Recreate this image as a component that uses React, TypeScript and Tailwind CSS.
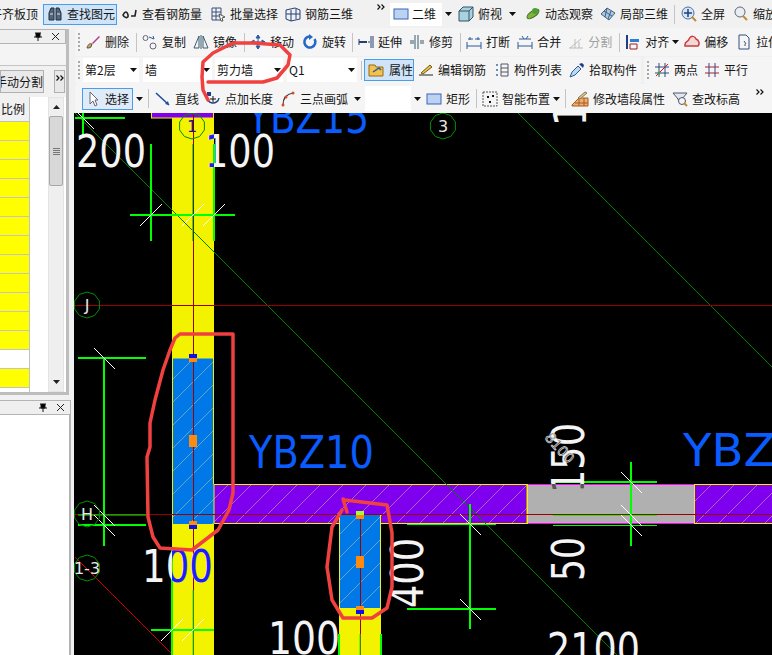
import React from 'react';

const Ico: React.FC<{ children: React.ReactNode; w?: number }> = ({ children, w = 16 }) => (
  <svg width={w} height={16} viewBox={`0 0 ${w} 16`} fill="none" className="shrink-0">
    {children}
  </svg>
);

const Caret = ({ className = '' }: { className?: string }) => (
  <svg width={7} height={4} viewBox="0 0 7 4" className={`shrink-0 ${className}`}>
    <path d="M0 0h7L3.5 4z" fill="#111" />
  </svg>
);

const Sep = ({ className = '' }: { className?: string }) => (
  <div className={`w-px h-[19px] bg-[#c4c4c4] shrink-0 ${className}`} />
);

const Grip = ({ className = '' }: { className?: string }) => (
  <div className={`w-[2px] h-[18px] border-l-2 border-dotted border-[#a8a8a8] shrink-0 ${className}`} />
);

const More = ({ className = '' }: { className?: string }) => (
  <svg width={8} height={6} viewBox="0 0 8 6" fill="none" stroke="#111" strokeWidth={1.2} className={`shrink-0 ${className}`}>
    <path d="M0.500 0.500L3 3L0.500 5.500M4.500 0.500L7 3L4.500 5.500" />
  </svg>
);

const Tool: React.FC<{ icon: React.ReactNode; label: string; className?: string; muted?: boolean }> = ({ icon, label, className = '', muted }) => (
  <div className={`flex items-center gap-[4px] shrink-0 text-[12px] ${muted ? 'text-[#a0a0a0]' : 'text-[#151515]'} ${className}`}>
    {icon}
    <span className="whitespace-nowrap">{label}</span>
  </div>
);

const Combo: React.FC<{ label: string; className: string }> = ({ label, className }) => (
  <div className={`h-[24px] bg-white flex items-center justify-between pl-[2px] pr-[2px] text-[12px] text-[#151515] shrink-0 ${className}`}>
    <span>{label}</span>
    <Caret />
  </div>
);

const I = {
  binoculars: <Ico><path d="M2 14V7l2-5h3v12zM9 14V2h3l2 5v7z" fill="#53657c" stroke="#20303f" /><path d="M3 8h3M10 8h3" stroke="#e8e8e8" /></Ico>,
  rebarView: <Ico><path d="M1 9c2-4 4-4 5 0s-4 3-5 0zM9 10h4l1-6" stroke="#222" strokeWidth="1.6" /></Ico>,
  batch: <Ico><path d="M2 2h9v12H2zM2 6h9M2 10h9M6 2v12" stroke="#35507a" /><path d="M9 8l6 3-3 1 1 3-2 0-1-3z" fill="#fff" stroke="#555" /></Ico>,
  rebar3d: <Ico><path d="M1 4l9-2 5 2v9l-9 2-5-2zM6 4v11M11 3v10M1 8l14 0" stroke="#24407a" /></Ico>,
  rect: <Ico><rect x="1" y="3" width="14" height="10" fill="#bcd2f3" stroke="#3b66b8" /></Ico>,
  cube: <Ico><path d="M1 5l4-4h10v10l-4 4H1z" fill="#a9d2de" stroke="#315464" /><path d="M1 5h10v10M11 5l4-4" stroke="#315464" /></Ico>,
  orbit: <Ico><ellipse cx="8" cy="8" rx="7" ry="3" transform="rotate(-35 8 8)" fill="#7fb43a" stroke="#3a6a1c" /><circle cx="10" cy="5" r="3" fill="#4f9e32" /></Ico>,
  local3d: <Ico><path d="M1 8l6-6 8 5-6 7z" fill="#a9c8e6" stroke="#45607c" /><path d="M4 5l8 5M7 2l-2 9M11 5l-3 8" stroke="#45607c" /></Ico>,
  full: <Ico><circle cx="7" cy="7" r="6" fill="#d6e5f5" stroke="#51709a" /><path d="M7 3v8M3 7h8" stroke="#1d3f86" strokeWidth="1.5" /><path d="M11 11l4 4" stroke="#c28a2c" strokeWidth="2" /></Ico>,
  zoom: <Ico><circle cx="7" cy="6" r="5" fill="#e9eef4" stroke="#667" /><path d="M10 10l4 4" stroke="#c28a2c" strokeWidth="2" /></Ico>,
  eraser: <Ico><path d="M2 14c1-4 3-5 5-4l-1 3c-1 1-3 1-4 1z" fill="#d8a64a" stroke="#555" /><path d="M7 9l7-7 1 1-7 7z" fill="#b23b8c" /></Ico>,
  copy: <Ico><circle cx="3.500" cy="4" r="2.500" stroke="#667" /><circle cx="11" cy="12" r="3" stroke="#667" /><path d="M7 3l5 2-1-3" stroke="#2e5a9c" /></Ico>,
  mirror: <Ico><path d="M6 2v12H1zM10 2v12h5z" stroke="#3a5a70" /><path d="M8 1v14" stroke="#3a5a70" /></Ico>,
  move: <Ico><path d="M8 1v14M1 8h14M8 1L6 4h4zM8 15l-2-3h4zM1 8l3-2v4zM15 8l-3-2v4z" stroke="#2e5a9c" fill="#2e5a9c" /></Ico>,
  rotate: <Ico><path d="M12.500 5A5.500 5.500 0 1 1 8 2.500" stroke="#2369c8" strokeWidth="2.600" /><path d="M7 0v6l4-3z" fill="#2369c8" /></Ico>,
  extend: <Ico><path d="M1 8h8" stroke="#23406e" strokeWidth="2" /><path d="M1 5v6M13 2v12M15 2v12M10 8h2" stroke="#23406e" /></Ico>,
  trim: <Ico><path d="M6 1v14M9 1v14M1 7h4M1 9h4M11 7h4M11 9h4" stroke="#3a5a70" /></Ico>,
  split: <Ico><path d="M1 12h14M1 8v7M15 8v7M4 3v3M12 3v3M2 5h5M9 5h5" stroke="#2e5a9c" /></Ico>,
  merge: <Ico><path d="M1 12h14M1 8v7M15 8v7M5 2l2 3M11 2L9 5" stroke="#2e5a9c" /><path d="M2 5h12" stroke="#2e5a9c" /></Ico>,
  cut: <Ico><path d="M1 14h14M2 14l11-9M7 5v9M11 8v6" stroke="#bdbdbd" /></Ico>,
  align: <Ico><path d="M2 1v14" stroke="#1d3f86" strokeWidth="2" /><path d="M5 5h9v3H5z" fill="#2a7fd0" /><path d="M5 10h7v5H5z" stroke="#a02020" /></Ico>,
  offset: <Ico><path d="M1 12c-1-5 4-4 4-7 2-4 6-3 7 0 3 1 4 5 2 7z" fill="#f3d6d6" stroke="#c83c3c" strokeWidth="1.500" /></Ico>,
  stretch: <Ico><path d="M3 1h7l3 3v11H3z" stroke="#33507a" /><path d="M8 7l2 3M8 11h2" stroke="#33507a" /></Ico>,
  prop: <Ico><path d="M1 3h6l1 2h7v9H1z" fill="#f2c14e" stroke="#9a6a10" /><path d="M5 10l6-4 2 2" stroke="#2e5a9c" strokeWidth="1.500" /></Ico>,
  edit: <Ico><path d="M1 13h14" stroke="#222" /><path d="M3 11l9-8 2 2-9 7z" fill="#e8c050" stroke="#7a5a10" /></Ico>,
  list: <Ico><path d="M2 2h2v2H2zM2 7h2v2H2zM2 12h2v2H2z" fill="#6b8eb8" /><path d="M7 2h7v12H7zM7 6h7M7 10h7" stroke="#556" /></Ico>,
  dropper: <Ico><path d="M1 15l2-5 6-6 3 3-6 6z" fill="#bcd8f2" stroke="#2e5a9c" /><path d="M10 2l4 4 1-3-2-2z" fill="#1d3f86" /></Ico>,
  twoPts: <Ico><path d="M5 1v14M11 1v14M1 5h14M1 11h14" stroke="#2e4a80" /><path d="M2 14L14 2" stroke="#c82020" /><circle cx="5" cy="11" r="1.500" fill="#3aa030" /></Ico>,
  parallel: <Ico><path d="M1 5h14M1 11h14" stroke="#b02030" /><path d="M5 1v14M11 1v14" stroke="#2e4a80" /></Ico>,
  cursor: <Ico w={10}><path d="M2 1v12l3-3 2 5 2-1-2-5h3z" fill="#fff" stroke="#667" /></Ico>,
  line: <Ico><path d="M1 2l13 12" stroke="#1d4f9c" strokeWidth="1.600" /><path d="M14 14l-4-1 3-3z" fill="#1d4f9c" /></Ico>,
  ptLen: <Ico><path d="M2 5a6 6 0 1 0 12 2" stroke="#1d3f86" strokeWidth="1.500" /><path d="M8 5v6M5 8h6" stroke="#111" /><path d="M2 1h4v4H2z" fill="#1d3f86" /></Ico>,
  arc: <Ico><path d="M3 14C3 7 7 3 13 2" stroke="#333" strokeWidth="1.200" /><circle cx="3" cy="14" r="1.500" fill="#d84a2a" /><circle cx="13" cy="2" r="1.500" fill="#d84a2a" /><circle cx="6" cy="6" r="1.500" fill="#d84a2a" /></Ico>,
  smart: <Ico><path d="M1 1h14v14H1z" stroke="#555" strokeDasharray="2 1" /><path d="M5 5h2v2H5zM10 4h2v2h-2zM7 10h2v2H7z" fill="#111" /></Ico>,
  wall: <Ico w={18}><path d="M1 14l7-7h9v8H1z" fill="#f0b070" stroke="#a85a20" /><path d="M4 12h13M8 7v8M13 7v8" stroke="#a85a20" /><path d="M7 7l7-6 2 1-7 6z" fill="#e8d060" stroke="#777" /></Ico>,
  level: <Ico><path d="M1 2h14l-5 6v1H6V8z" fill="#dfe8f2" stroke="#556" /><circle cx="10" cy="10" r="3.500" fill="#f0f4f8" stroke="#556" /><path d="M12 12l3 3" stroke="#c28a2c" strokeWidth="2" /></Ico>,
};

const rows = Array.from({ length: 14 }, (_, i) => i);

const Pin = () => (
  <svg width={8} height={9} viewBox="0 0 8 9" className="shrink-0">
    <path d="M1 1h6M2 1v4h4V1M0 5h8M4 5v4" stroke="#111" />
  </svg>
);
const Cross = () => (
  <svg width={9} height={9} viewBox="0 0 9 9" className="shrink-0">
    <path d="M1 1l7 7M8 1L1 8" stroke="#222" />
  </svg>
);

const PanelHead = () => (
  <div className="h-[15px] flex items-center justify-end gap-[9px] pr-[5px] bg-[#efefef] border-y border-r border-[#b4b4b4]">
    <Pin />
    <Cross />
  </div>
);

const LeftPanel = () => (
  <div className="w-[74px] shrink-0 h-full flex flex-col bg-[#f1f1f1] text-[#151515] overflow-hidden">
    <div className="h-[366px] w-[69px] shrink-0 mt-px border-r-[3px] border-b-[3px] border-[#bdbdbd] flex flex-col">
      <PanelHead />
      <div className="h-[22px] bg-[#f4f4f4] border-b border-[#c4c4c4]" />
      <div className="h-[31px] flex items-center bg-[#f1f1f1]">
        <div className="w-[44px] h-[23px] overflow-hidden shrink-0 bg-[#e9e9e9] border border-[#b0b0b0] flex items-center justify-end text-[12px] whitespace-nowrap">手动分割</div>
        <div className="w-[11px] h-[23px] ml-[10px] bg-[#e9e9e9] border border-[#b0b0b0] flex items-start pt-[4px] justify-center"><More /></div>
      </div>
      <div className="flex flex-1 min-h-0 bg-white pr-[2px]">
        <div className="w-[30px] shrink-0 flex flex-col border-r border-[#c0c0c0]">
          <div className="h-[25px] shrink-0 bg-[#f1f1f1] border-b border-[#c0c0c0] flex items-center justify-end pr-[4px] text-[12px]">比例</div>
          {rows.map(i => (
            <div key={i} className={`h-[19px] shrink-0 border-b border-[#c4c4c4] ${i === 12 ? 'bg-white' : 'bg-[#ffff00]'}`} />
          ))}
        </div>
        <div className="w-[18px] shrink-0" />
        <div className="w-[16px] shrink-0 bg-[#efefef] flex flex-col items-center border border-[#e4e4e4]">
          <svg width={7} height={4} viewBox="0 0 7 4" className="mt-[7px] mb-[7px]"><path d="M0 4h7L3.500 0z" fill="#222" /></svg>
          <div className="w-[14px] h-[70px] rounded-[2px] bg-[#d8d8d8] border border-[#a8a8a8] flex flex-col items-center justify-center gap-px">
            <div className="w-[7px] h-px bg-[#777]" />
            <div className="w-[7px] h-px bg-[#777]" />
            <div className="w-[7px] h-px bg-[#777]" />
            <div className="w-[7px] h-px bg-[#777]" />
          </div>
          <div className="flex-1" />
          <svg width={7} height={4} viewBox="0 0 7 4" className="mb-[7px]"><path d="M0 0h7L3.500 4z" fill="#222" /></svg>
        </div>
      </div>
    </div>
    <div className="h-[5px] shrink-0" />
    <div className="w-[71px] flex-1 flex flex-col">
      <PanelHead />
      <div className="flex-1 bg-white border-r-2 border-[#b4b4b4]" />
    </div>
  </div>
);

const Wh = ({ x, y, w, children, rot }: { x: number; y: number; w: number; children: string; rot?: boolean }) => (
  <text
    x={x}
    y={y}
    textLength={w}
    lengthAdjust="spacingAndGlyphs"
    fontSize={44}
    transform={rot ? `rotate(-90 ${x} ${y})` : undefined}
  >
    {children}
  </text>
);

// white dimension ticks: dir 1 is "/", dir -1 is "\"
const tick = (x: number, y: number, dir: number) =>
  dir > 0 ? `M${x - 11} ${y + 11}L${x + 11} ${y - 11}` : `M${x - 10} ${y - 10}L${x + 11} ${y + 11}`;

// axis bubbles are coarse polygons in the drawing, not true circles
const bubble = (x: number, y: number) =>
  Array.from({ length: 10 }, (_, i) => {
    const a = (i * Math.PI) / 5 - Math.PI / 2;
    return `${(x + 13 * Math.cos(a)).toFixed(1)},${(y + 13 * Math.sin(a)).toFixed(1)}`;
  }).join(' ');

const Canvas = () => {
  const dims = (
    <>
      <Wh x={76} y={167} w={70}>200</Wh>
      <Wh x={205} y={167} w={70}>100</Wh>
      <Wh x={142} y={582} w={71}>100</Wh>
      <Wh x={268} y={654} w={72}>100</Wh>
      <Wh x={547} y={665} w={93}>2100</Wh>
      <Wh x={423} y={608} w={70} rot>400</Wh>
      <Wh x={584} y={581} w={44} rot>50</Wh>
      <Wh x={584} y={493} w={70} rot>150</Wh>
      <Wh x={586} y={126} w={70} rot>150</Wh>
    </>
  );
  const greenThick = 'M75 118H125M83 113V138M130 215H235M151 144V241M214 144V241M104 358V546M78 358H146M78 525H146M151 630H214M172 550V655M339 634V655M381 634V655M470 504V629M407 609H496M631 462V546M553 482H657';
  const greenThin = 'M192.500 144V241M78 515H146M193 590V655M360 634V655M407 524.500H496M553 515.500H657M553 525.500H657';
  const ticks = [
    tick(151, 215, 1), tick(193, 215, 1), tick(214, 215, 1),
    tick(172, 630, 1), tick(193, 630, 1),
    tick(83, 118, -1), tick(104, 358, -1), tick(104, 525, -1), tick(104, 515, -1),
    tick(470, 524, -1), tick(470, 609, -1),
    tick(631, 482, -1), tick(631, 515, -1), tick(631, 525, -1),
  ].join('');
  return (
    <svg viewBox="74 113 698 542" width={698} height={542} className="block bg-black [font-family:'DejaVu_Sans',sans-serif]">
      <defs>
        <pattern id="hatch" patternUnits="userSpaceOnUse" width={23} height={23}>
          <path d="M0 23L23 0" stroke="#d6d69a" strokeOpacity="0.6" strokeWidth="0.8" />
        </pattern>
        <clipPath id="onYellow">
          <path d="M172 113h42v245h-42zM172 524h42v131h-42zM339 608h42v47h-42z" />
        </clipPath>
        <clipPath id="onGray">
          <rect x={527} y={484} width={168} height={40} />
        </clipPath>
      </defs>

      {/* columns */}
      <rect x={172} y={113} width={42} height={542} fill="#f3f300" />
      <rect x={339} y={515} width={42} height={140} fill="#f3f300" />
      {/* walls */}
      <rect x={151.500} y={105} width={62} height={13} fill="#7f00ee" stroke="#f3f300" />
      <rect x={214} y={484.500} width={313} height={39} fill="#7f00ee" stroke="#f3f300" />
      <rect x={214} y={484.500} width={313} height={39} fill="url(#hatch)" />
      <rect x={694.500} y={484.500} width={90} height={39} fill="#7f00ee" stroke="#f3f300" />
      <rect x={694.500} y={484.500} width={90} height={39} fill="url(#hatch)" />
      <rect x={527} y={484} width={168} height={40} fill="#b0b0b0" />
      <path d="M527 484.500H694M527 523.500H694" stroke="#ff00ff" />
      <path d="M527.500 484V524M694.500 484V524" stroke="#f3f300" />
      {/* selected blocks */}
      <rect x={172.500} y={358} width={41} height={166} fill="#0078e8" />
      <rect x={172.500} y={358} width={41} height={166} fill="url(#hatch)" />
      <rect x={339.500} y={515} width={41} height={93} fill="#0078e8" />
      <rect x={339.500} y={515} width={41} height={93} fill="url(#hatch)" />
      <path d="M172.500 358V524M339.500 515V608M380.500 515V608" stroke="#f3f300" />
      <path d="M172.500 358H214M213.500 358V484" stroke="#f3f300" />

      {/* grid lines */}
      <path d="M75 113L617 655M518 113L772 367" stroke="#008000" />
      <path d="M75 557L172 654" stroke="#ff0000" strokeWidth={0.8} />
      <path d="M74 305.500H772M74 514.500H772M193.500 113V655M360.500 512V655" stroke="#9a0000" />

      {/* dimension marks */}
      <path d={greenThin} stroke="#00ff00" />
      <path d={greenThick} stroke="#00ff00" strokeWidth="2" />
      <path d={ticks} stroke="#ffffff" />

      {/* dimension text */}
      <g fill="#f4f4f4">{dims}</g>
      <g fill="#1c1cff" clipPath="url(#onYellow)">{dims}</g>
      <g fill="#555555" clipPath="url(#onGray)">{dims}</g>
      <g fill="#0a5cff">
        <Wh x={247} y={133} w={122}>YBZ15</Wh>
        <Wh x={249} y={468} w={125}>YBZ10</Wh>
        <Wh x={683} y={466} w={122}>YBZ3</Wh>
      </g>
      <text x={544} y={438} fontSize={14} fill="#000" stroke="#e8e8e8" strokeWidth={0.7} transform="rotate(48 544 438)">8100</text>

      {/* axis bubbles */}
      {[
        { x: 192, y: 126, t: '1', c: '#30108a' },
        { x: 443, y: 126, t: '3', c: '#e8e8e8' },
        { x: 87, y: 305, t: 'J', c: '#e8e8e8' },
        { x: 87, y: 514, t: 'H', c: '#e8e8e8' },
        { x: 87, y: 568, t: '1-3', c: '#e8e8e8' },
      ].map(b => (
        <g key={b.t}>
          <polygon points={bubble(b.x, b.y)} stroke="#009000" fill="none" />
          <text x={b.x} y={b.y + 6} fontSize={16} fill={b.c} textAnchor="middle">{b.t}</text>
        </g>
      ))}

      {/* grips */}
      <path d="M189 354h8v4h-8zM189 525h8v4h-8zM356 610h8v4h-8z" fill="#1010e8" />
      <path d="M189 358h8v4h-8zM189 521h8v4h-8zM189 435h8v12h-8zM356 515h8v4h-8zM356 556h8v12h-8zM356 606h8v4h-8z" fill="#ff8a10" />
      <path d="M356 511h8v4h-8z" fill="#a0ff30" />
    </svg>
  );
};

const App: React.FC = () => (
  <div className="relative w-[772px] h-[655px] overflow-hidden flex flex-col bg-[#f0f0f0] [font-family:'Noto_Sans_CJK_SC',sans-serif]">
    {/* top toolbar */}
    <div className="h-[28px] shrink-0 flex items-center bg-[#f1f1f1] overflow-hidden">
      <span className="-ml-[10px] w-[50px] shrink-0 text-[12px] whitespace-nowrap text-[#151515]">平齐板顶</span>
      <div className="ml-[3px] w-[74px] h-[21px] shrink-0 flex items-center gap-[4px] pl-[3px] bg-[#cfe4f8] border border-[#4a9de8] text-[12px] text-[#151515]">
        {I.binoculars}
        <span className="whitespace-nowrap">查找图元</span>
      </div>
      <Tool className="ml-[5px]" icon={I.rebarView} label="查看钢筋量" />
      <Tool className="ml-[8px]" icon={I.batch} label="批量选择" />
      <Tool className="ml-[7px]" icon={I.rebar3d} label="钢筋三维" />
      <More className="ml-[24px] -mt-[14px] mr-[2px]" />
      <div className="ml-[3px] h-[23px] w-[52px] shrink-0 bg-white pl-[3px] flex items-center gap-[3px] text-[12px] text-[#151515]">
        {I.rect}
        <span>二维</span>
      </div>
      <Caret className="ml-[3px]" />
      <Tool className="ml-[6px]" icon={I.cube} label="俯视" />
      <Caret className="ml-[7px]" />
      <Tool className="ml-[9px]" icon={I.orbit} label="动态观察" />
      <Tool className="ml-[7px]" icon={I.local3d} label="局部三维" />
      <Sep className="ml-[6px]" />
      <Tool className="ml-[6px]" icon={I.full} label="全屏" />
      <Tool className="ml-[8px]" icon={I.zoom} label="缩放" />
    </div>

    <div className="flex flex-1 min-h-0">
      <LeftPanel />
      <div className="w-[698px] flex flex-col">
        {/* edit toolbar */}
        <div className="h-[28px] shrink-0 flex items-center overflow-hidden bg-[#f5f5f5] ml-px rounded-l-[3px]">
          <Grip className="ml-[3px]" />
          <Tool className="ml-[5px]" icon={I.eraser} label="删除" />
          <Sep className="ml-[7px]" />
          <Tool className="ml-[5px]" icon={I.copy} label="复制" />
          <Tool className="ml-[7px]" icon={I.mirror} label="镜像" />
          <Sep className="ml-[7px]" />
          <Tool className="ml-[5px]" icon={I.move} label="移动" />
          <Tool className="ml-[8px]" icon={I.rotate} label="旋转" />
          <Sep className="ml-[6px]" />
          <Tool className="ml-[5px]" icon={I.extend} label="延伸" />
          <Tool className="ml-[7px]" icon={I.trim} label="修剪" />
          <Sep className="ml-[7px]" />
          <Tool className="ml-[5px]" icon={I.split} label="打断" />
          <Tool className="ml-[7px]" icon={I.merge} label="合并" />
          <Tool className="ml-[7px]" icon={I.cut} label="分割" muted />
          <Sep className="ml-[7px]" />
          <Tool className="ml-[5px]" icon={I.align} label="对齐" />
          <Caret className="ml-[3px]" />
          <Tool className="ml-[5px]" icon={I.offset} label="偏移" />
          <Tool className="ml-[8px]" icon={I.stretch} label="拉伸" />
        </div>

        {/* component toolbar */}
        <div className="h-[28px] shrink-0 flex items-center overflow-hidden">
          <div className="h-[27px] w-[566px] ml-px shrink-0 flex items-center bg-[#f5f5f5] rounded-[3px]">
            <Grip className="ml-[3px]" />
            <Combo className="ml-[3px] w-[56px]" label="第2层" />
            <Combo className="ml-[4px] w-[69px]" label="墙" />
            <Combo className="ml-[3px] w-[68px]" label="剪力墙" />
            <Combo className="ml-[4px] w-[70px]" label="Q1" />
            <Sep className="ml-[4px]" />
            <div className="ml-[2px] w-[50px] h-[22px] shrink-0 flex items-center gap-[5px] pl-[3px] bg-[#cfe4f8] border border-[#4a9de8] text-[12px] text-[#151515]">
              {I.prop}
              <span>属性</span>
            </div>
            <Tool className="ml-[4px]" icon={I.edit} label="编辑钢筋" />
            <Tool className="ml-[8px]" icon={I.list} label="构件列表" />
            <Tool className="ml-[7px]" icon={I.dropper} label="拾取构件" />
          </div>
          <div className="h-[27px] flex-1 ml-[3px] flex items-center bg-[#f5f5f5] rounded-l-[3px]">
            <Grip className="ml-[3px]" />
            <Tool className="ml-[5px]" icon={I.twoPts} label="两点" />
            <Tool className="ml-[6px]" icon={I.parallel} label="平行" />
          </div>
        </div>

        {/* draw toolbar */}
        <div className="h-[29px] shrink-0 flex items-center overflow-hidden bg-[#f5f5f5] ml-px rounded-l-[3px]">
          <div className="ml-[7px] w-[51px] h-[22px] shrink-0 flex items-center gap-[7px] pl-[5px] bg-[#dfebf8] border border-[#4a9de8] text-[12px] text-[#151515]">
            {I.cursor}
            <span>选择</span>
          </div>
          <Caret className="ml-[3px]" />
          <Sep className="ml-[5px]" />
          <Tool className="ml-[6px]" icon={I.line} label="直线" />
          <Tool className="ml-[6px]" icon={I.ptLen} label="点加长度" />
          <Tool className="ml-[7px]" icon={I.arc} label="三点画弧" />
          <Caret className="ml-[6px]" />
          <div className="ml-[4px] w-[46px] h-[25px] bg-white shrink-0" />
          <Caret className="ml-[3px]" />
          <Tool className="ml-[5px]" icon={I.rect} label="矩形" />
          <Sep className="ml-[6px]" />
          <Tool className="ml-[5px]" icon={I.smart} label="智能布置" />
          <Caret className="ml-[3px]" />
          <Sep className="ml-[5px]" />
          <Tool className="ml-[5px]" icon={I.wall} label="修改墙段属性" />
          <Tool className="ml-[7px]" icon={I.level} label="查改标高" />
          <More className="ml-[16px] -mt-[14px]" />
        </div>

        <Canvas />
      </div>
    </div>

    {/* hand drawn marker annotations */}
    <svg className="absolute inset-0 pointer-events-none" width={772} height={655} fill="none" stroke="#f04040" strokeWidth={3.5} strokeLinejoin="round" strokeLinecap="round">
      <path d="M180 334L233 334L233 493L229 510L218 530L192 550L160 548L153 537L148 517L147 457L150 447L150 423L155 400L163 370L170 350L175 338Z" />
      <path d="M342 510L332 527L327 567L332 600L343 618L372 618L387 608L392 587L392 533L387 505L345 500L343 499L347 512" />
      <path d="M208 82L233 82L263 82L277 78L288 65L290 55L280 45L253 43L233 43L213 53L203 62L202 77L203 90L208 100" />
    </svg>
  </div>
);

export default App;
